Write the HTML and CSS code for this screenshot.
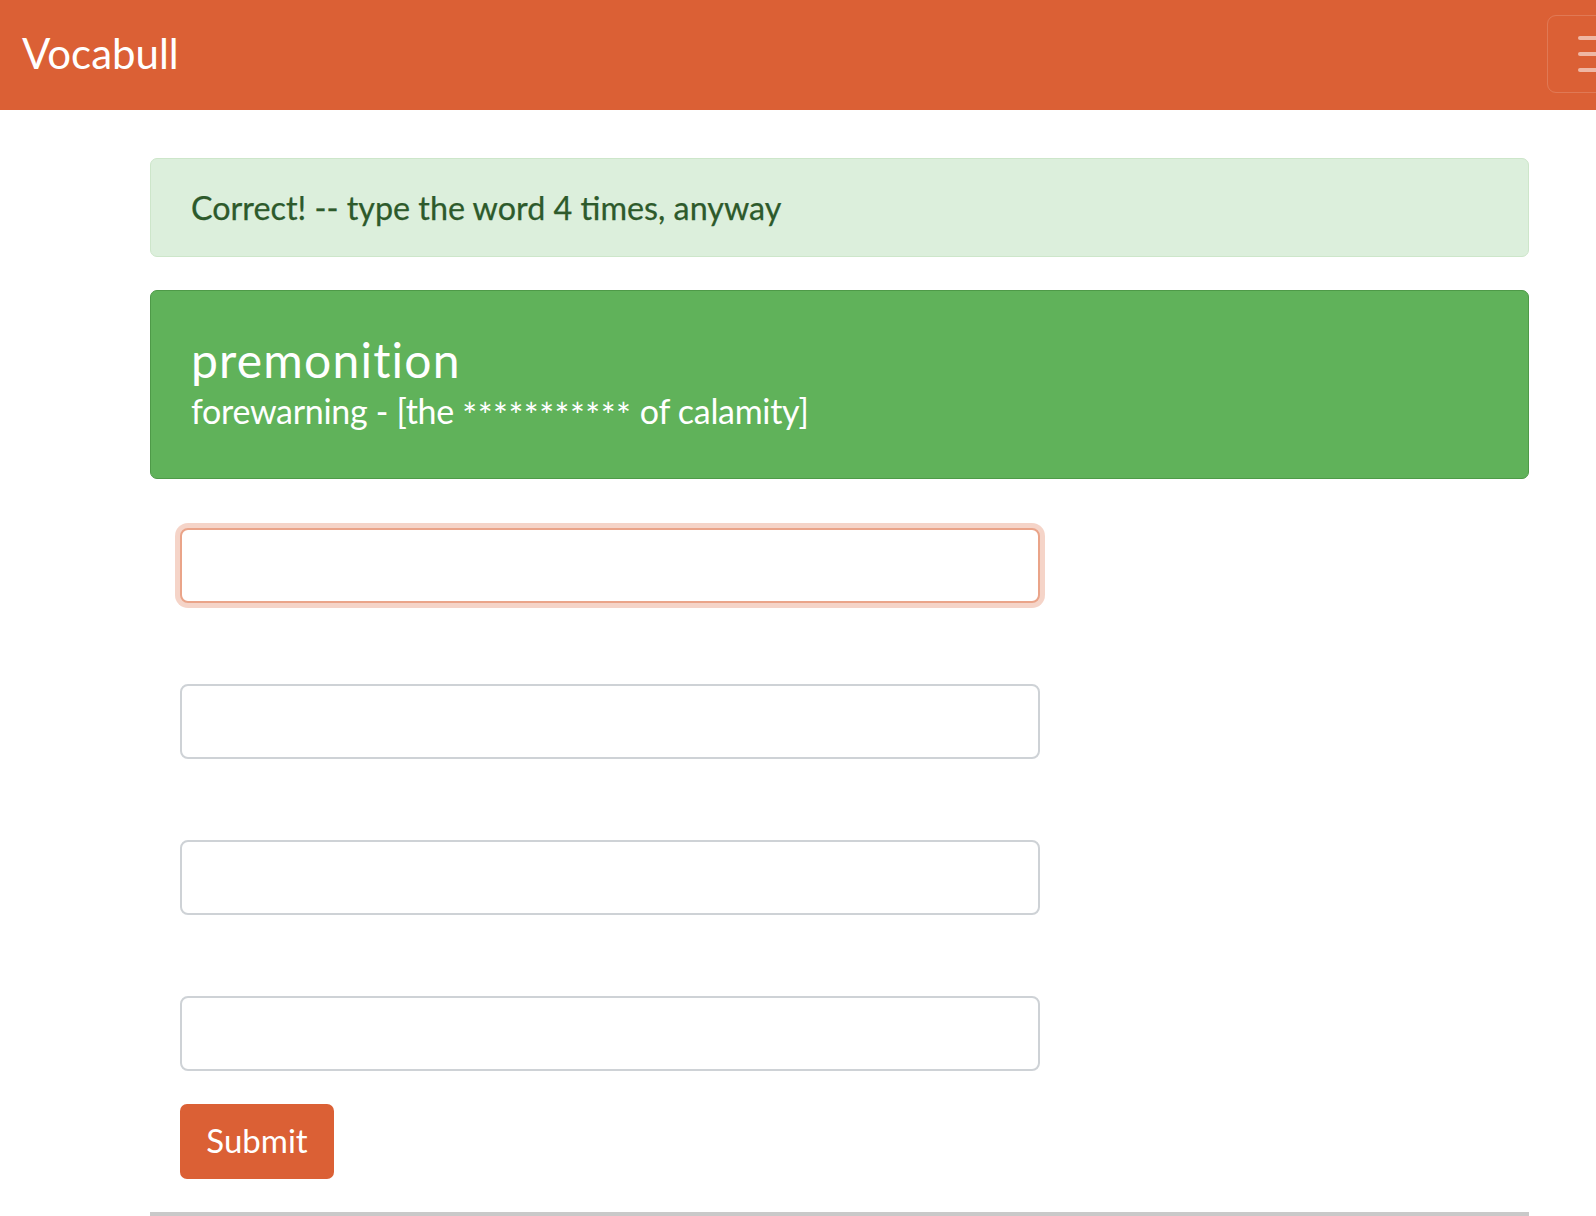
FILE: index.html
```html
<!DOCTYPE html>
<html lang="en">
<head>
<meta charset="utf-8">
<title>Vocabull</title>
<link rel="stylesheet" href="styles.css">
</head>
<body>
<nav class="navbar">
  <a class="brand" href="#">Vocabull</a>
  <button class="toggler" type="button" aria-label="Toggle navigation">
    <span class="bar"></span>
    <span class="bar"></span>
    <span class="bar"></span>
  </button>
</nav>
<main class="container">
  <div class="alert">Correct! -- type the word 4 times, anyway</div>
  <div class="word-card">
    <div class="word">premonition</div>
    <div class="definition">forewarning - [the <span class="stars">***********</span> of calamity]</div>
  </div>
  <form class="entry-form">
    <div class="inputs">
      <input class="field field-focus" type="text">
      <input class="field" type="text">
      <input class="field" type="text">
      <input class="field" type="text">
    </div>
    <button class="submit" type="button">Submit</button>
  </form>
  <hr class="rule">
</main>
</body>
</html>
```
FILE: styles.css
```css
html, body {
  margin: 0;
  padding: 0;
  background: #ffffff;
}
body {
  font-family: Lato, "Open Sans", sans-serif;
  overflow: hidden;
}
.navbar {
  height: 110px;
  background: #db6035;
  display: flex;
  align-items: flex-start;
  overflow: hidden;
  box-sizing: border-box;
  padding-left: 22px;
}
.brand {
  font-size: 42px;
  line-height: 106px;
  color: #ffffff;
  text-decoration: none;
}
.toggler {
  margin-left: auto;
  margin-right: -52px;
  margin-top: 15px;
  width: 101px;
  height: 78px;
  box-sizing: border-box;
  border: 1.5px solid rgba(255, 255, 255, 0.16);
  border-radius: 9px;
  background: transparent;
  padding: 20px 0 0 30px;
  display: flex;
  flex-direction: column;
  gap: 12.5px;
  align-items: flex-start;
}
.bar {
  display: block;
  width: 50px;
  height: 3.5px;
  border-radius: 2px;
  background: rgba(255, 255, 255, 0.55);
}
.container {
  width: 1379px;
  margin-left: 150px;
  padding-top: 48px;
}
.alert {
  box-sizing: border-box;
  height: 99px;
  border: 1px solid #cde6ca;
  background: #dcefdc;
  border-radius: 7px;
  color: #2d5a2b;
  font-size: 32.3px;
  padding: 1px 0 0 40px;
  line-height: 96px;
  -webkit-text-stroke: 0.25px #2d5a2b;
}
.word-card {
  box-sizing: border-box;
  margin-top: 33px;
  height: 189px;
  background: #60b25a;
  border: 1px solid #4e9a48;
  border-radius: 7px;
  color: #ffffff;
  padding: 43px 0 0 40px;
}
.word {
  font-size: 48px;
  line-height: 52.8px;
  letter-spacing: 1.2px;
}
.definition {
  margin-top: 4px;
  font-size: 34px;
  line-height: 40px;
  letter-spacing: -0.3px;
}
.stars {
  font-size: 35px;
  letter-spacing: 0.5px;
  vertical-align: -4px;
  line-height: 0;
}
.entry-form {
  padding-left: 30px;
  margin-top: 49px;
}
.inputs {
  display: grid;
  row-gap: 81px;
  width: 860px;
}
.field {
  box-sizing: border-box;
  height: 75px;
  width: 860px;
  border: 2px solid #ced2d6;
  border-radius: 8px;
  background: #ffffff;
  margin: 0;
  padding: 0 20px;
  font-family: inherit;
  font-size: 32px;
  outline: none;
}
.field-focus {
  border-color: #eaa489;
  box-shadow: 0 0 0 5px rgba(219, 96, 53, 0.27);
}
.submit {
  margin-top: 33px;
  box-sizing: border-box;
  height: 75px;
  width: 154px;
  border: none;
  border-radius: 7px;
  background: #db6035;
  color: #ffffff;
  font-family: inherit;
  font-size: 33px;
  line-height: 73px;
  padding: 0 0 2px 0;
  display: block;
}
.rule {
  margin: 33px 0 0 0;
  border: none;
  border-top: 4px solid #c9c9c9;
  height: 0;
}
```
